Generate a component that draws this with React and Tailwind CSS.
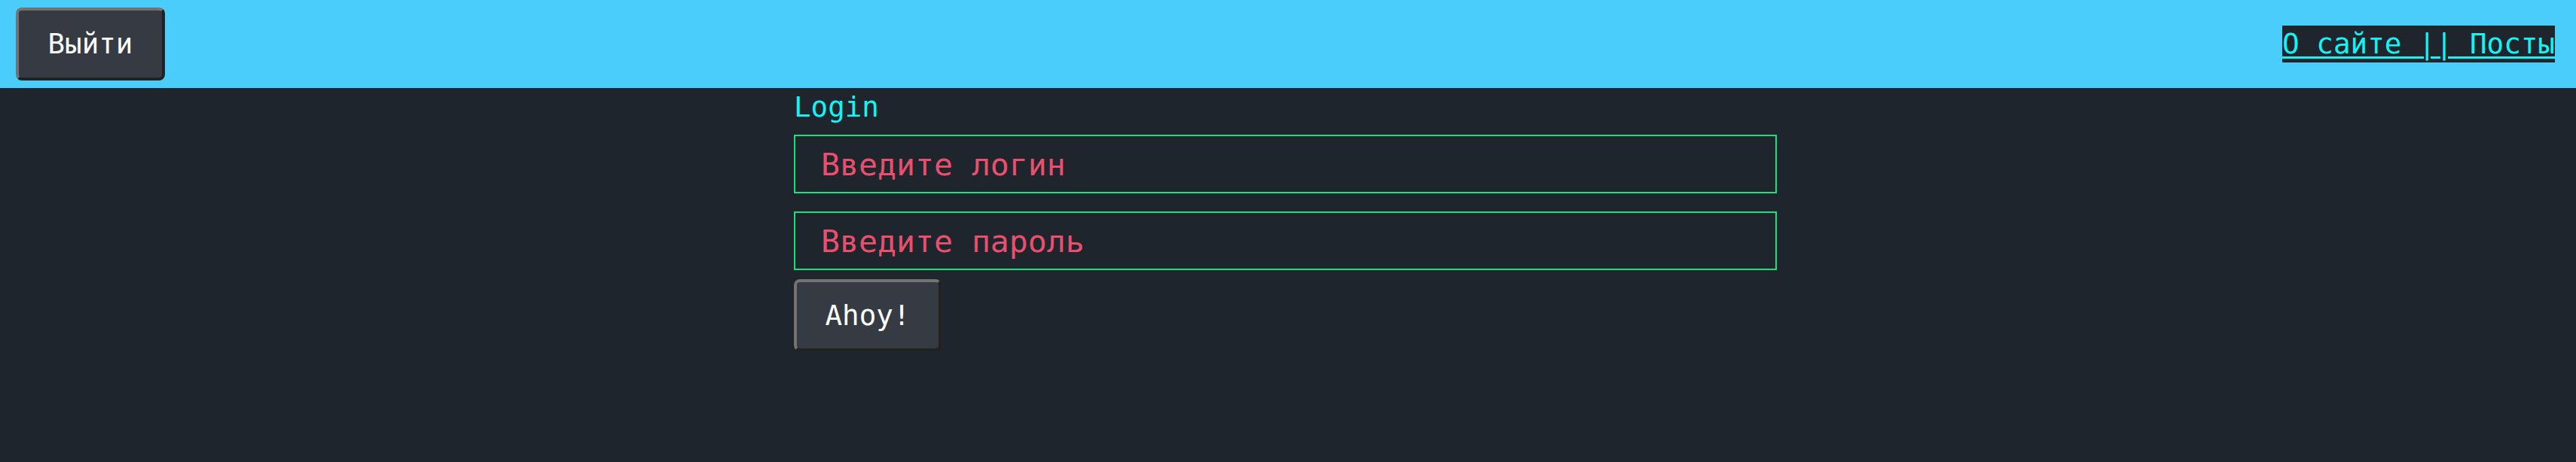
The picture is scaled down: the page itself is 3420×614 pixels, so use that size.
export default function App() {
  return (
    <div className="min-h-[614px] bg-[#1f252d] font-['DejaVu_Sans_Mono',monospace]">
      {/* Шапка */}
      <header className="flex h-[117px] items-center justify-between bg-[#4acdfa] pl-[21px] pr-[28px]">
        <button className="h-[97px] w-[198px] rounded-[8px] border-4 border-t-[#737373] border-l-[#737373] border-r-[#222222] border-b-[#222222] bg-[#363a42] text-[37.5px] text-white">
          Выйти
        </button>
        <a
          href="#"
          className="bg-[#1f252d] text-[37.6px] leading-[49px] text-[#14f4f4] underline decoration-[3px] underline-offset-[4px]"
        >
          О сайте || Посты
        </a>
      </header>

      {/* Форма входа */}
      <main className="mx-auto w-[1312px] pt-[3px]">
        <label className="block text-[37.5px] leading-[44px] text-[#14f4f4]">Login</label>
        <div className="mt-[15px] flex flex-col gap-[24px]">
          <input
            type="text"
            placeholder="Введите логин"
            className="h-[78px] w-[1305px] border-2 border-[#15e27d] bg-transparent pl-[34px] text-[41.5px] text-white outline-none placeholder:text-[#e8506d]"
          />
          <input
            type="password"
            placeholder="Введите пароль"
            className="h-[78px] w-[1305px] border-2 border-[#15e27d] bg-transparent pl-[34px] text-[41.5px] text-white outline-none placeholder:text-[#e8506d]"
          />
        </div>
        <button className="mt-[12px] h-[96px] w-[196px] rounded-[8px] border-4 border-t-[#737373] border-l-[#737373] border-r-[#222222] border-b-[#222222] bg-[#363a42] text-[37.5px] text-white">
          Ahoy!
        </button>
      </main>
    </div>
  );
}
